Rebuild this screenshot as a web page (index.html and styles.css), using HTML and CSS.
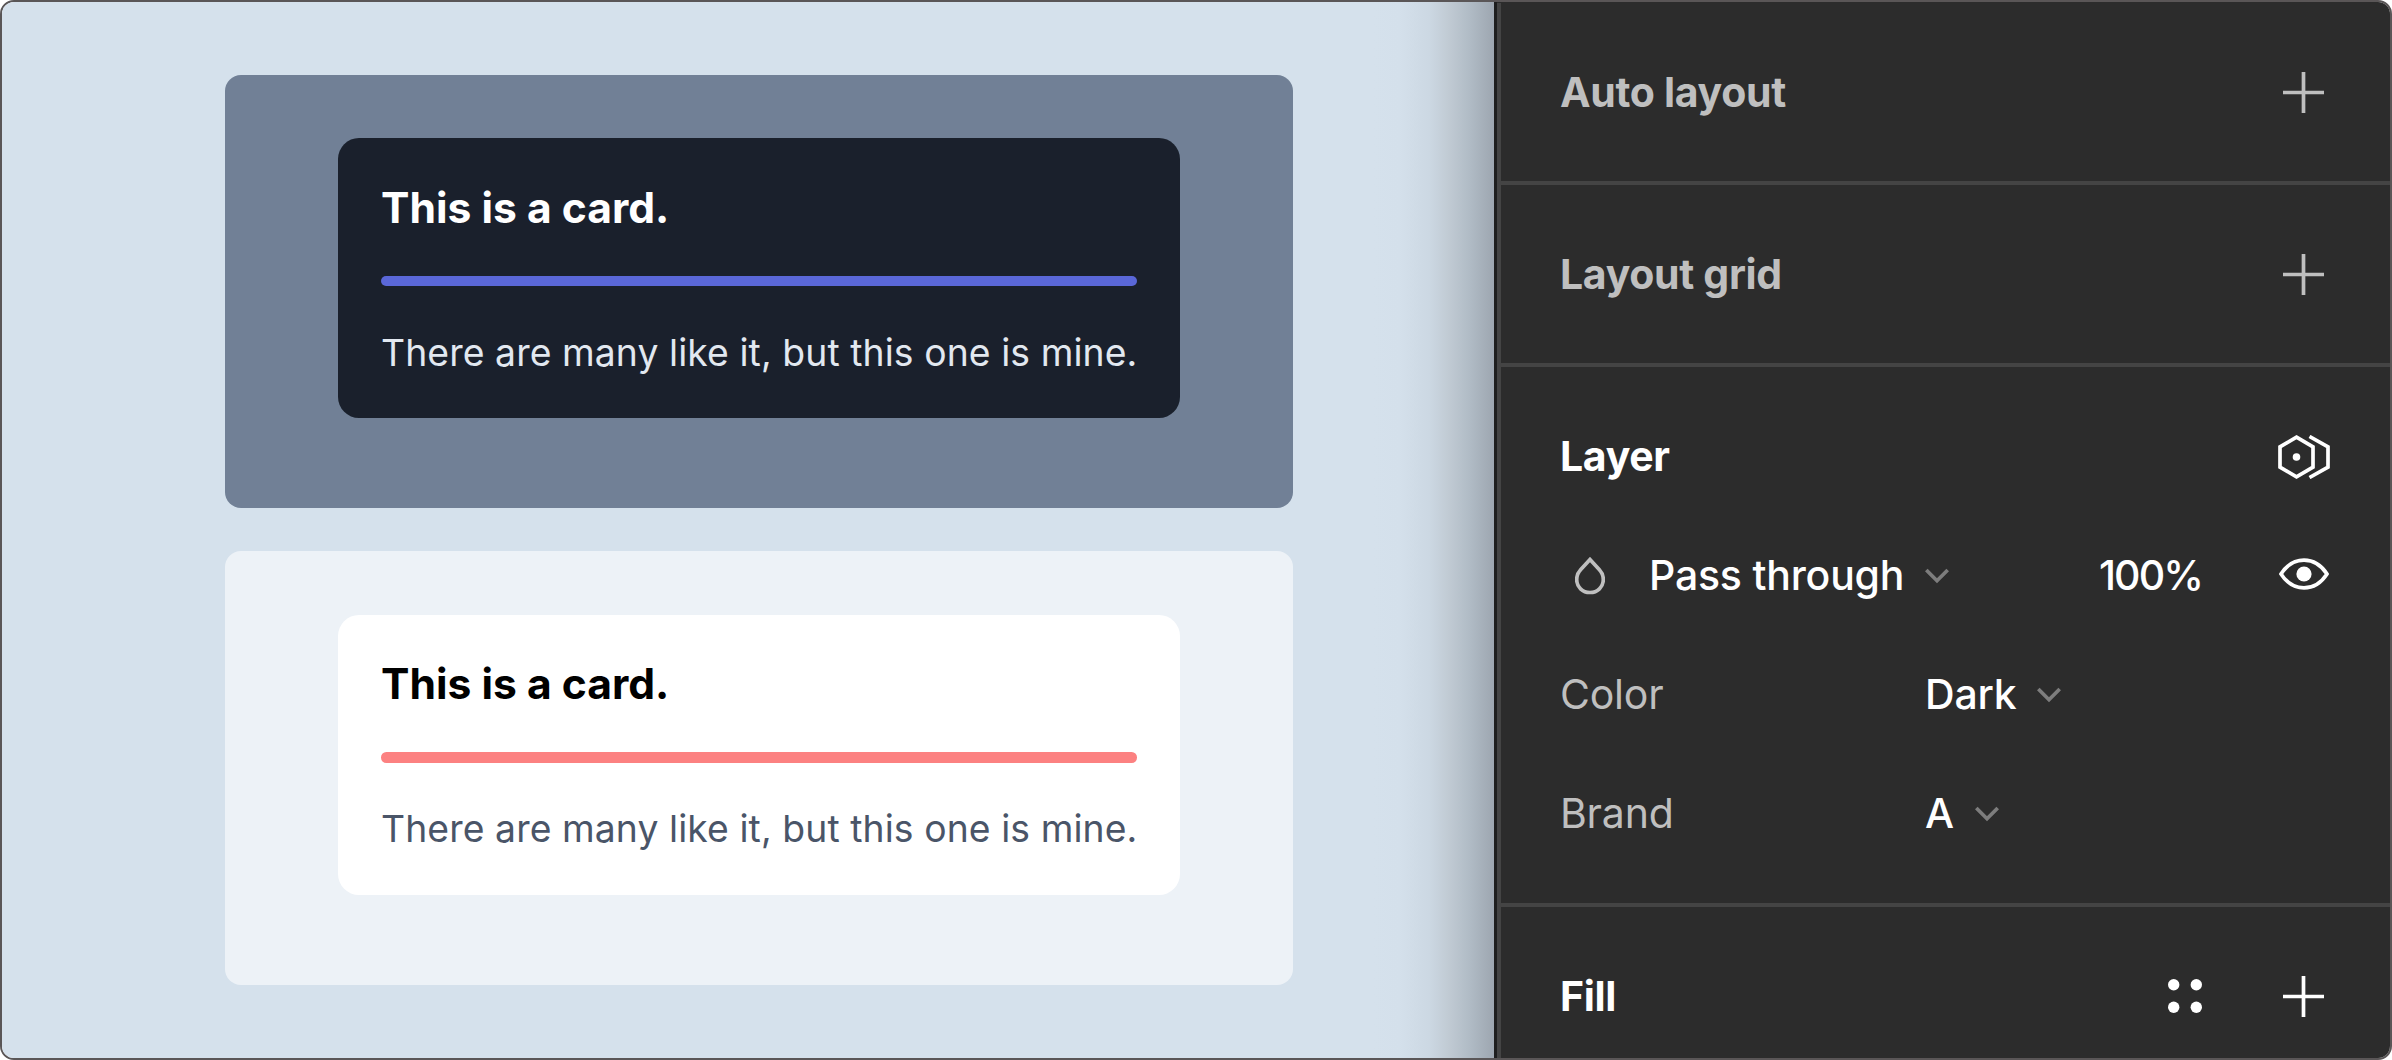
FILE: index.html
```html
<!DOCTYPE html>
<html lang="en">
<head>
<meta charset="utf-8">
<title>Variable modes</title>
<link rel="stylesheet" href="styles.css">
</head>
<body>
<main class="window">
  <section class="canvas">
    <div class="frame frame-dark">
      <article class="card">
        <h2 class="card-title">This is a card.</h2>
        <div class="card-rule"></div>
        <p class="card-text">There are many like it, but this one is mine.</p>
      </article>
    </div>
    <div class="frame frame-light">
      <article class="card">
        <h2 class="card-title">This is a card.</h2>
        <div class="card-rule"></div>
        <p class="card-text">There are many like it, but this one is mine.</p>
      </article>
    </div>
  </section>
  <aside class="panel">
    <section class="section">
      <div class="row muted">
        <h3 class="heading">Auto layout</h3>
        <svg class="icon plus" viewBox="0 0 41 41"><path d="M20.5 0v41M0 20.5h41"/></svg>
      </div>
    </section>
    <section class="section">
      <div class="row muted">
        <h3 class="heading">Layout grid</h3>
        <svg class="icon plus" viewBox="0 0 41 41"><path d="M20.5 0v41M0 20.5h41"/></svg>
      </div>
    </section>
    <section class="section section-layer">
      <div class="row">
        <h3 class="heading">Layer</h3>
        <svg class="icon modes" viewBox="0 0 52 44"><path d="M18.500 2.200L35 11.800V32.200L18.500 41.800L2 32.200V11.800ZM31.500 1.500L50 11.800V32.200L31.500 42.500"/><circle class="solid" cx="18.500" cy="22" r="3.800"/></svg>
      </div>
      <div class="row">
        <svg class="icon drop" viewBox="0 0 30 38"><path d="M15 2.500L24.200 12.500C27 15.500 28.300 19 28.300 22.500C28.300 30 22.500 35.500 15 35.500S1.700 30 1.700 22.500C1.700 19 3 15.500 5.800 12.500Z"/></svg>
        <span class="blend">Pass through</span>
        <svg class="icon chevron" viewBox="0 0 24 16"><path d="M1.300 2L12 12.700L22.700 2"/></svg>
        <span class="opacity">100%</span>
        <svg class="icon eye" viewBox="0 0 50 32"><path d="M2 16C14 -2.500 36 -2.500 48 16C36 34.500 14 34.500 2 16Z"/><circle class="solid" cx="25" cy="16" r="7.600"/></svg>
      </div>
      <div class="row">
        <span class="label">Color</span>
        <span class="value">Dark</span>
        <svg class="icon chevron" viewBox="0 0 24 16"><path d="M1.300 2L12 12.700L22.700 2"/></svg>
      </div>
      <div class="row">
        <span class="label">Brand</span>
        <span class="value">A</span>
        <svg class="icon chevron" viewBox="0 0 24 16"><path d="M1.300 2L12 12.700L22.700 2"/></svg>
      </div>
    </section>
    <section class="section">
      <div class="row">
        <h3 class="heading">Fill</h3>
        <svg class="icon styles" viewBox="0 0 34 34"><circle cx="5.700" cy="5.700" r="5.700"/><circle cx="28.300" cy="5.700" r="5.700"/><circle cx="5.700" cy="28.300" r="5.700"/><circle cx="28.300" cy="28.300" r="5.700"/></svg>
        <svg class="icon plus" viewBox="0 0 41 41"><path d="M20.5 0v41M0 20.5h41"/></svg>
      </div>
    </section>
  </aside>
</main>
</body>
</html>
```
FILE: styles.css
```css
* { box-sizing: border-box; }

body {
  margin: 0;
  background: #fff;
  font-family: Inter, "Liberation Sans", sans-serif;
}

h2, h3, p { margin: 0; }

.window {
  display: flex;
  width: 2392px;
  height: 1060px;
  border: 2px solid #5a5657;
  border-radius: 14px;
  overflow: hidden;
}

/* Canvas */
.canvas {
  display: flex;
  flex-direction: column;
  gap: 43px;
  width: 1492px;
  padding: 73px 0 0 223px;
  background:
    linear-gradient(to left, #9da6b0 0, #b0bbc5 24px, #c1cbd4 46px, #ccd8e3 65px, #d4e0eb 95px, transparent 120px) right / 120px 100% no-repeat,
    #d5e1ec;
}

.frame {
  display: flex;
  justify-content: center;
  align-items: flex-start;
  width: 1068px;
  height: 433.400px;
  padding-top: 63.400px;
  border-radius: 16px;
}

.frame-dark { background: #718096; }
.frame-light { background: #edf2f7; }

.card {
  display: flex;
  flex-direction: column;
  gap: 42.300px;
  width: 842px;
  height: 280px;
  padding: 43px;
  border-radius: 21px;
}

.card-title {
  font-size: 42.600px;
  line-height: 52px;
  font-weight: 700;
}

.frame-dark .card-title { padding-top: 0.400px; margin-bottom: -0.400px; }

.card-rule {
  flex: none;
  height: 10.700px;
  border-radius: 5.300px;
}

.card-text {
  font-size: 37.300px;
  line-height: 47px;
  font-weight: 400;
  letter-spacing: 0.0025em;
  white-space: nowrap;
}

.frame-dark .card { background: #1a202c; }
.frame-dark .card-title { color: #fff; }
.frame-dark .card-rule { background: #5a67d8; }
.frame-dark .card-text { color: #e2e8f0; }
.frame-light .card { background: #fff; }
.frame-light .card-title { color: #000; }
.frame-light .card-rule { background: #fc8181; }
.frame-light .card-text { color: #4a5568; }

/* Properties panel */
.panel {
  flex: 1;
  padding-top: 1px;
  border-left: 3px solid #1e1e1e;
  background: #2c2c2c;
  color: #fff;
  font-size: 41px;
  font-weight: 500;
  line-height: 50px;
  letter-spacing: -0.005em;
}

.section {
  padding: 30px 66px 30px 59px;
  border-left: 4px solid #444;
  border-bottom: 4px solid #444;
}

.section:last-child { border-bottom: 0; height: 200px; }

.row {
  display: flex;
  align-items: center;
  height: 119px;
}

.section > .row:only-child { height: 118px; }

.heading {
  flex: 1;
  font-size: inherit;
  font-weight: 700;
  letter-spacing: -0.008em;
}

/* Optical centering of text beside the icons */
.section-layer span,
.section-layer .heading { padding-bottom: 1px; }

.muted, .label { color: #bfbfbf; }

.icon {
  flex: none;
  fill: none;
  stroke: currentColor;
  stroke-width: 3.700;
}

.solid { fill: currentColor; stroke: none; }
.plus { width: 41px; height: 41px; }
.modes { width: 52px; height: 44px; margin-right: -6px; }
.drop { width: 30px; height: 38px; margin: 0 44px 0 15px; color: #bfbfbf; }
.eye { width: 50px; height: 32px; margin: -4px -5px 0 0; }
.chevron { width: 24px; height: 16px; margin-left: 21px; color: #7d7d7d; }
.styles { width: 34px; height: 34px; margin-right: 81px; fill: currentColor; stroke: none; }
.blend { white-space: nowrap; }
.opacity { margin: 0 77px 0 auto; letter-spacing: -0.047em; }
.label { width: 365px; font-weight: 400; }
```
